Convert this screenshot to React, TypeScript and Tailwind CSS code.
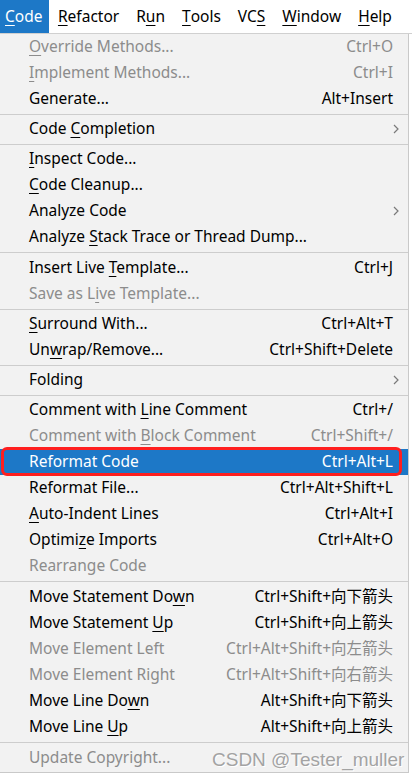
import React from "react";

type Item =
  | { sep: 4 | 5 }
  | {
      sep?: undefined;
      label: string; // "&" marks the mnemonic letter
      keys?: string;
      off?: boolean;
      sub?: boolean;
      on?: boolean;
    };

const menus = ["&Code", "&Refactor", "R&un", "&Tools", "VC&S", "&Window", "&Help"];

const items: Item[] = [
  { label: "&Override Methods...", keys: "Ctrl+O", off: true },
  { label: "&Implement Methods...", keys: "Ctrl+I", off: true },
  { label: "Generate...", keys: "Alt+Insert" },
  { sep: 4 },
  { label: "Code &Completion", sub: true },
  { sep: 4 },
  { label: "&Inspect Code..." },
  { label: "&Code Cleanup..." },
  { label: "Analyze Code", sub: true },
  { label: "Analyze &Stack Trace or Thread Dump..." },
  { sep: 5 },
  { label: "Insert Live &Template...", keys: "Ctrl+J" },
  { label: "Save as L&ive Template...", off: true },
  { sep: 4 },
  { label: "&Surround With...", keys: "Ctrl+Alt+T" },
  { label: "Un&wrap/Remove...", keys: "Ctrl+Shift+Delete" },
  { sep: 4 },
  { label: "Folding", sub: true },
  { sep: 4 },
  { label: "Comment with &Line Comment", keys: "Ctrl+/" },
  { label: "Comment with &Block Comment", keys: "Ctrl+Shift+/", off: true },
  { label: "Reformat Code", keys: "Ctrl+Alt+L", on: true },
  { label: "Reformat File...", keys: "Ctrl+Alt+Shift+L" },
  { label: "&Auto-Indent Lines", keys: "Ctrl+Alt+I" },
  { label: "Optimi&ze Imports", keys: "Ctrl+Alt+O" },
  { label: "Rearrange Code", off: true },
  { sep: 5 },
  { label: "Move Statement Do&wn", keys: "Ctrl+Shift+向下箭头" },
  { label: "Move Statement &Up", keys: "Ctrl+Shift+向上箭头" },
  { label: "Move Element Left", keys: "Ctrl+Alt+Shift+向左箭头", off: true },
  { label: "Move Element Right", keys: "Ctrl+Alt+Shift+向右箭头", off: true },
  { label: "Move Line Do&wn", keys: "Alt+Shift+向下箭头" },
  { label: "Move Line &Up", keys: "Alt+Shift+向上箭头" },
  { sep: 5 },
  { label: "Update Copyright...", off: true },
];

function Mnemonic({ text }: { text: string }) {
  const i = text.indexOf("&");
  if (i < 0) return <>{text}</>;
  return (
    <>
      {text.slice(0, i)}
      <span className="underline decoration-1 underline-offset-[3px]">{text[i + 1]}</span>
      {text.slice(i + 2)}
    </>
  );
}

function Chevron() {
  return (
    <svg width="6" height="10" viewBox="0 0 6 10" className="mr-[9px]">
      <path d="M1 1 L5 5 L1 9" fill="none" stroke="#7a7a7a" strokeWidth="1.2" />
    </svg>
  );
}

export default function App() {
  return (
    <div
      className="w-[412px] h-[780px] overflow-hidden bg-white text-[15.5px] text-black relative"
      style={{ fontFamily: '"Noto Sans", "Noto Sans CJK SC", sans-serif' }}
    >
      {/* menu bar */}
      <div className="flex h-[33px] items-center bg-white border-b border-[#d0d0d0] box-content">
        {menus.map((m, i) => (
          <div
            key={m}
            className={
              i === 0
                ? "h-full flex items-center pl-[5px] pr-[7px] bg-[#1d78c7] text-white"
                : "h-full flex items-center px-[8.5px]"
            }
          >
            <Mnemonic text={m} />
          </div>
        ))}
      </div>

      <div className="flex">
        {/* dropdown */}
        <div className="w-[409px] bg-[#f2f2f2] border-r border-b border-[#c9c9c9] pb-[1px]">
          {items.map((it, i) =>
            it.sep ? (
              <div key={i} className={(it.sep === 4 ? "h-[4px]" : "h-[5px]") + " flex items-center"}>
                <div className="h-px w-full bg-[#cdcdcd]" />
              </div>
            ) : (
              <div
                key={i}
                className={
                  "relative h-[26px] flex items-center justify-between pl-[29px] " +
                  (it.on ? "bg-[#1d78c7] text-white " : "") +
                  (it.off ? "text-[#8c8c8c]" : "")
                }
              >
                <span className="whitespace-nowrap">
                  <Mnemonic text={it.label} />
                </span>
                {it.keys && <span className="pr-[15px] whitespace-nowrap">{it.keys}</span>}
                {it.sub && <Chevron />}
                {it.on && (
                  <div className="absolute left-[1px] right-[6px] -top-[2px] -bottom-[1px] border-[3px] border-[#ff1f1f] rounded-[6px]" />
                )}
              </div>
            )
          )}
        </div>
        {/* editor edge behind the popup */}
        <div className="flex-1 bg-white" />
      </div>

      {/* watermark */}
      <div
        className="absolute left-[212px] top-[746px] text-[19px] text-[#a3a3a3]"
        style={{ fontFamily: '"Liberation Sans", Arial, sans-serif', textShadow: "1px 1px 0 #ffffff" }}
      >
        CSDN @Tester_muller
      </div>
    </div>
  );
}
